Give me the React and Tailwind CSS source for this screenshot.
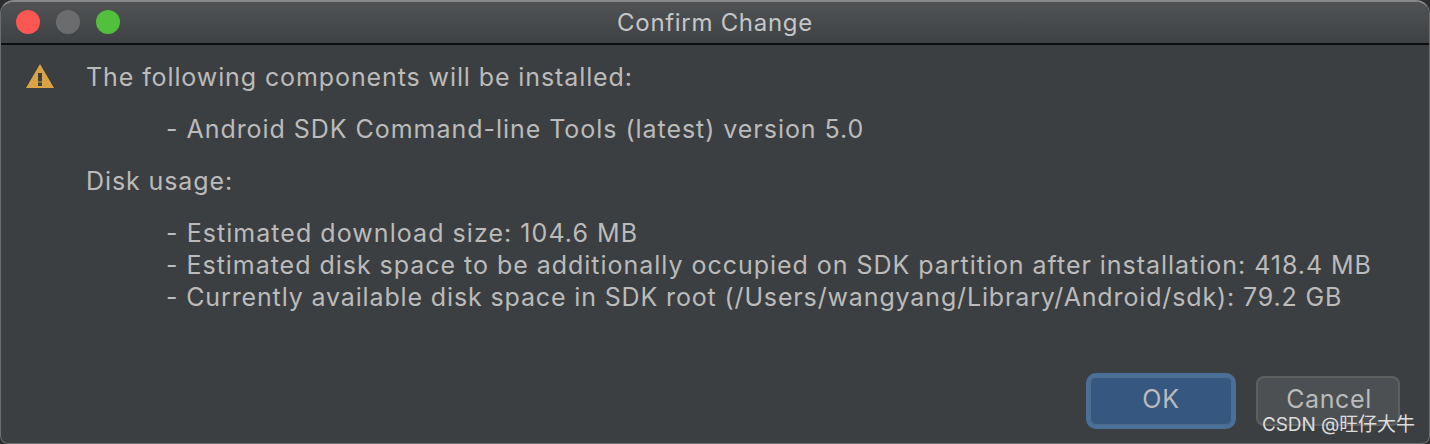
import React from "react";

const font = { fontFamily: "Inter, 'Noto Sans CJK SC', sans-serif" };

const App = () => {
  return (
    <div className="relative w-[1430px] h-[444px] bg-[#2b2d2f] overflow-hidden" style={font}>
      <div className="flex flex-col w-full h-full rounded-t-[14px] rounded-b-[8px] bg-[#3c3f41] border border-[#6b6d6f] border-t-[#87898b] border-t-2 overflow-hidden">
        {/* Title bar */}
        <div className="relative flex items-center justify-center h-[43px] shrink-0 bg-gradient-to-b from-[#505254] to-[#3f4244] border-b-2 border-[#0e0e0e]">
          <div className="absolute left-[15px] top-[8px] flex gap-4">
            <div className="w-6 h-6 rounded-full bg-[#fc5753]" />
            <div className="w-6 h-6 rounded-full bg-[#6b6c6e]" />
            <div className="w-6 h-6 rounded-full bg-[#52bf3d]" />
          </div>
          <span className="text-[24px] text-[#c4c6c7] tracking-[0.7px]">Confirm Change</span>
        </div>

        {/* Content */}
        <div className="flex flex-1 min-h-0 pl-[25px] pt-[16px]">
          <svg width="28" height="24" viewBox="0 0 28 24" className="shrink-0 mt-[3px]">
            <path d="M14 0 L28 24 H0 Z" fill="#dba246" />
            <rect x="12" y="9" width="4" height="8.5" fill="#3c3f41" />
            <rect x="12" y="18.5" width="4" height="3.5" fill="#3c3f41" />
          </svg>
          <div className="ml-[32px] text-[25px] leading-[32px] text-[#bbbbbb] whitespace-pre tracking-[0.9px]">
            <p>The following components will be installed:</p>
            <p className="mt-5 ml-[80px] tracking-[0.96px]">- Android SDK Command-line Tools (latest) version 5.0</p>
            <p className="mt-5">Disk usage:</p>
            <div className="mt-5 ml-[80px]">
              <p className="tracking-[1.05px]">- Estimated download size: 104.6 MB</p>
              <p className="tracking-[0.97px]">- Estimated disk space to be additionally occupied on SDK partition after installation: 418.4 MB</p>
              <p className="tracking-[0.86px]">- Currently available disk space in SDK root (/Users/wangyang/Library/Android/sdk): 79.2 GB</p>
            </div>
          </div>
        </div>

        {/* Buttons */}
        <div className="flex justify-end items-center gap-[20px] pr-[29px] pb-[14px]">
          <button className="w-[150px] h-[56px] rounded-[10px] bg-[#365880] border-[4px] border-[#4a7099] outline outline-1 -outline-offset-[5px] outline-[#4c708c] pb-[2px] text-[25px] tracking-[0.8px] text-[#bbbbbb]">
            OK
          </button>
          <button className="w-[144px] h-[50px] rounded-[8px] bg-[#4c5052] border-2 border-[#5e6060] pb-[2px] pl-[2px] text-[25px] tracking-[0.6px] text-[#bbbbbb]">
            Cancel
          </button>
        </div>
      </div>

      {/* Watermark */}
      <span className="absolute left-[1262px] top-[412px] text-[19px] leading-[26px] text-[#dcdcdc] tracking-[-0.1px]">CSDN @旺仔大牛</span>
    </div>
  );
};

export default App;
